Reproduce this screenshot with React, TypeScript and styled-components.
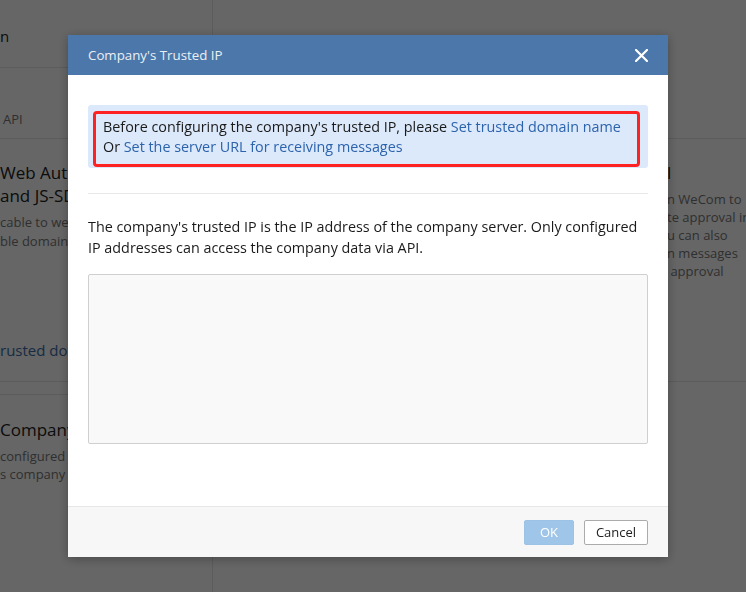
import React from 'react'
import styled, { createGlobalStyle } from 'styled-components'

const GlobalStyle = createGlobalStyle`
  * { box-sizing: border-box; }
  html, body { margin: 0; padding: 0; }
  body {
    font-family: 'Open Sans', 'Noto Sans', Arial, sans-serif;
    color: #222;
  }
`

// the page that sits under the dialog
const Page = styled.div`
  display: flex;
  width: 100%;
  height: 100vh;
  background: #fff;
  overflow: hidden;
`

const Sidebar = styled.aside`
  width: 213px;
  flex: none;
  border-right: 1px solid #e6e6e6;
  display: flex;
  flex-direction: column;
  overflow: hidden;
`

const NavItem = styled.div`
  height: 68px;
  padding-top: 26px;
  border-bottom: 1px solid #e6e6e6;
  font-size: 15px;
  line-height: 20px;
  color: #222;
  white-space: nowrap;
`

const TabRow = styled.div`
  height: 71px;
  display: flex;
  align-items: flex-end;
  padding: 0 0 10px 3px;
  border-bottom: 1px solid #e6e6e6;
  font-size: 13px;
  color: #777;
`

const Card = styled.div<{ $height?: number; $last?: boolean }>`
  height: ${(p) => (p.$height ? `${p.$height}px` : 'auto')};
  display: flex;
  flex-direction: column;
  padding-top: ${(p) => (p.$last ? '23px' : '22px')};
  border-bottom: ${(p) => (p.$last ? '0' : '1px solid #e6e6e6')};
  white-space: nowrap;
`

const CardSpacer = styled.div`
  height: 13px;
  border-bottom: 1px solid #e6e6e6;
`

const CardTitle = styled.div`
  font-size: 17px;
  line-height: 23px;
  color: #222;
`

const CardDesc = styled.div<{ $tight?: boolean }>`
  margin-top: 6px;
  font-size: 13px;
  line-height: ${(p) => (p.$tight ? '18px' : '19px')};
  color: #777;
`

const CardLink = styled.div`
  margin-top: auto;
  margin-bottom: 21px;
  font-size: 15px;
  line-height: 20px;
  color: #3d6da8;
`

const Main = styled.div`
  flex: 1;
  display: flex;
  flex-direction: column;
`

const MainHead = styled.div`
  height: 139px;
  border-bottom: 1px solid #e6e6e6;
`

const CardGrid = styled.div`
  height: 243px;
  display: grid;
  grid-template-columns: 454px 1fr;
  border-bottom: 1px solid #e6e6e6;
`

const GridCard = styled.div`
  padding-top: 22px;
  white-space: nowrap;
  overflow: hidden;
`

const GridDesc = styled.div`
  margin-top: 6px;
  font-size: 13px;
  line-height: 18px;
  color: #777;
`

// modal
const Overlay = styled.div`
  position: fixed;
  inset: 0;
  background: rgba(0, 0, 0, 0.6);
`

const Dialog = styled.div`
  position: fixed;
  left: 68px;
  top: 35px;
  width: 600px;
  height: 522px;
  display: flex;
  flex-direction: column;
  background: #fff;
  box-shadow: 0 2px 10px rgba(0, 0, 0, 0.3);
`

const Header = styled.div`
  height: 40px;
  flex: none;
  display: flex;
  align-items: center;
  justify-content: space-between;
  padding: 0 20px;
  background: #4b77aa;
`

const Title = styled.h3`
  margin: 0;
  font-size: 13.3px;
  font-weight: 400;
  color: #eaeff5;
`

const CloseButton = styled.button`
  display: flex;
  padding: 0;
  border: 0;
  background: none;
  cursor: pointer;
`

const Body = styled.div`
  flex: 1;
  padding: 30px 20px 0;
`

const Notice = styled.div`
  padding: 6px 8px 1px 5px;
  border-radius: 3px;
  background: #dce9fb;
`

const Highlight = styled.div`
  padding: 3px 7px 7px;
  border: 3px solid #ff2222;
  border-radius: 4px;
  font-size: 14.35px;
  line-height: 20px;
  color: #1a1a1a;
`

const TextLink = styled.a`
  color: #2c63ad;
  text-decoration: none;
  cursor: pointer;
`

const Divider = styled.hr`
  margin: 25px 0 0;
  border: 0;
  border-top: 1px solid #e8e8e8;
`

const Intro = styled.p`
  margin: 22px 0 0;
  font-size: 14.35px;
  line-height: 21px;
  color: #1a1a1a;
`

const IpInput = styled.textarea`
  display: block;
  width: 100%;
  height: 170px;
  margin-top: 16px;
  border: 1px solid #cfcfcf;
  border-radius: 2px;
  background: #f9f9f9;
  resize: none;
  outline: none;
  font: inherit;
`

const Footer = styled.div`
  height: 51px;
  flex: none;
  display: flex;
  align-items: center;
  justify-content: flex-end;
  gap: 10px;
  padding: 0 20px;
  border-top: 1px solid #e6e6e6;
  background: #f7f7f7;
`

const Button = styled.button<{ $primary?: boolean }>`
  height: 25px;
  padding: 0;
  width: ${(p) => (p.$primary ? '50px' : '64px')};
  border: 1px solid ${(p) => (p.$primary ? '#9cc3e6' : '#ababab')};
  border-radius: 2px;
  background: ${(p) => (p.$primary ? '#9fc5e8' : '#fff')};
  color: ${(p) => (p.$primary ? '#fff' : '#222')};
  font-family: inherit;
  font-size: 13px;
  cursor: pointer;
`

export default function App() {
  return (
    <>
      <GlobalStyle />
      <Page>
        <Sidebar>
          <NavItem>n</NavItem>
          <TabRow>API</TabRow>
          <Card $height={243}>
            <CardTitle>Web Auth</CardTitle>
            <CardTitle>and JS-SDK</CardTitle>
            <CardDesc>
              cable to web
              <br />
              ble domain
            </CardDesc>
            <CardLink>rusted domain</CardLink>
          </Card>
          <CardSpacer />
          <Card $last>
            <CardTitle>Company's Trusted IP</CardTitle>
            <CardDesc $tight>
              configured IP
              <br />s company data
            </CardDesc>
          </Card>
        </Sidebar>
        <Main>
          <MainHead />
          <CardGrid>
            <GridCard />
            <GridCard>
              <CardTitle>l</CardTitle>
              <GridDesc>
                n WeCom to
                <br />
                te approval in
                <br />
                u can also
                <br />
                n messages
                <br />
                &nbsp;approval
              </GridDesc>
            </GridCard>
          </CardGrid>
        </Main>
      </Page>

      <Overlay />
      <Dialog>
        <Header>
          <Title>Company's Trusted IP</Title>
          <CloseButton aria-label="Close">
            <svg width="13" height="13" viewBox="0 0 13 13">
              <path
                d="M1 1 L12 12 M12 1 L1 12"
                stroke="#fff"
                strokeWidth="2.2"
                strokeLinecap="square"
              />
            </svg>
          </CloseButton>
        </Header>
        <Body>
          <Notice>
            <Highlight>
              Before configuring the company's trusted IP, please{' '}
              <TextLink>Set trusted domain name</TextLink>
              <br />
              Or <TextLink>Set the server URL for receiving messages</TextLink>
            </Highlight>
          </Notice>
          <Divider />
          <Intro>
            The company's trusted IP is the IP address of the company server.
            Only configured IP addresses can access the company data via API.
          </Intro>
          <IpInput />
        </Body>
        <Footer>
          <Button $primary disabled>
            OK
          </Button>
          <Button>Cancel</Button>
        </Footer>
      </Dialog>
    </>
  )
}
